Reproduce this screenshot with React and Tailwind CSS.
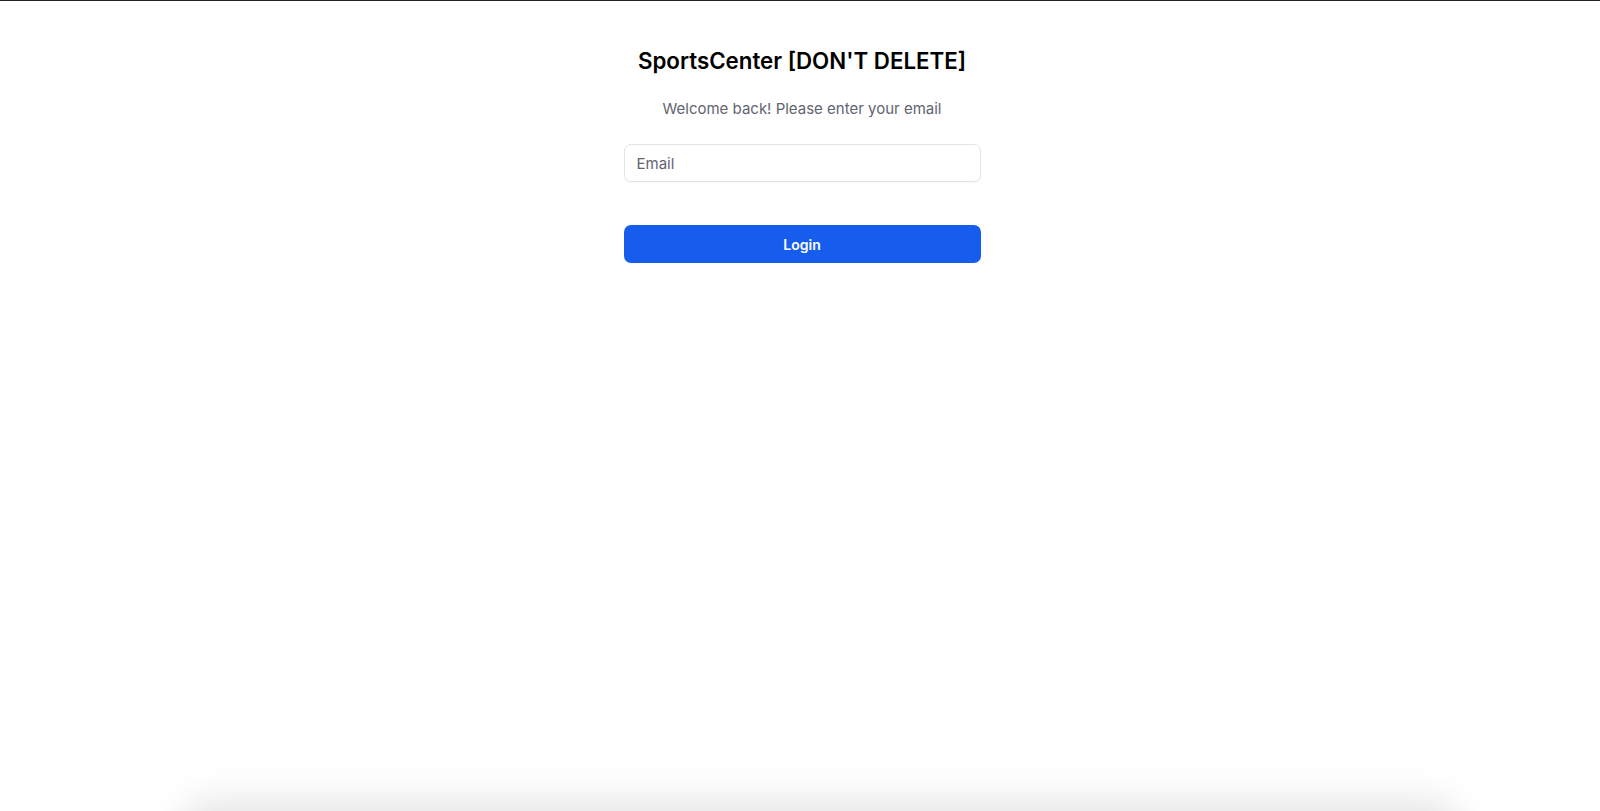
import React, { useState } from 'react';

export default function App() {
  const [email, setEmail] = useState('');

  return (
    <div
      className="relative min-h-[811px] bg-white border-t border-[#222] overflow-hidden"
      style={{ fontFamily: 'Inter, "Noto Sans", sans-serif' }}
    >
      <div className="flex flex-col items-center pt-[45px] pl-[4px]">
        <h1 className="text-[22.3px] leading-[30px] font-semibold text-black">
          SportsCenter [DON'T DELETE]
        </h1>
        <p className="mt-[22px] text-[15px] leading-[22px] text-[#5f6470]">
          Welcome back! Please enter your email
        </p>

        <form
          className="w-[357px] mt-[24px] flex flex-col"
          onSubmit={(e) => e.preventDefault()}
        >
          <input
            type="email"
            placeholder="Email"
            value={email}
            onChange={(e) => setEmail(e.target.value)}
            className="h-[38px] w-full rounded-[7px] border border-[#e3e4e8] px-[12px] text-[15px] text-gray-900 placeholder:text-[#5f6470] outline-none shadow-[0_1px_2px_rgba(0,0,0,0.04)]"
          />
          <button
            type="submit"
            className="mt-[43px] h-[38px] w-full rounded-[7px] bg-[#175ded] text-white text-[14px] font-semibold"
          >
            Login
          </button>
        </form>
      </div>

      {/* shadow of something floating just under the window */}
      <div className="fixed left-[190px] right-[150px] bottom-[-40px] h-[40px] rounded-[20px] bg-white shadow-[0_0_40px_8px_rgba(0,0,0,0.12)]" />
    </div>
  );
}
